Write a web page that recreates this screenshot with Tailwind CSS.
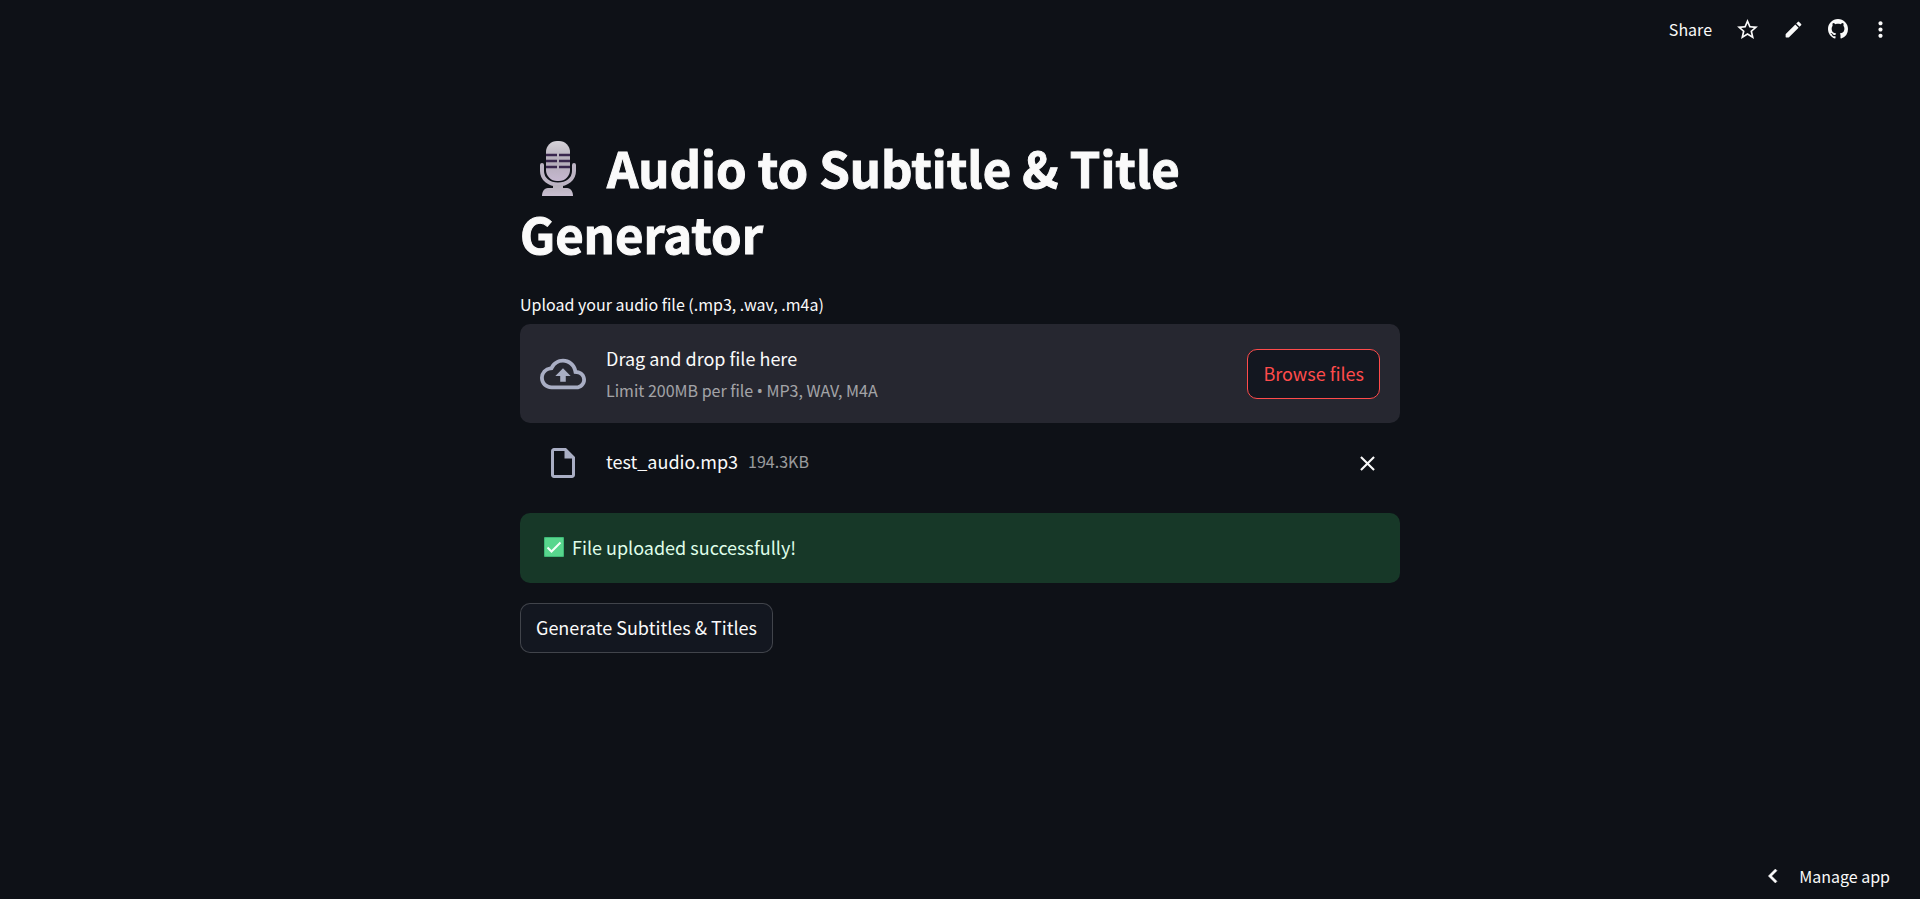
<!DOCTYPE html>
<html lang="en">
<head>
<meta charset="utf-8">
<meta name="viewport" content="width=device-width, initial-scale=1">
<title>Audio to Subtitle &amp; Title Generator</title>
<script src="https://cdn.jsdelivr.net/npm/@tailwindcss/browser@4"></script>
</head>
<body class="min-h-screen flex flex-col bg-[#0e1117] text-[#fafafa] font-['Noto_Sans_CJK_SC','Noto_Sans',sans-serif] text-lg leading-8">
<header class="h-[58px] flex items-center justify-end pr-[27px]">
  <button class="text-base leading-6 mr-6">Share</button>
  <button aria-label="Star" class="mr-6"><svg class="size-[23px]" viewBox="1 1 22 22" fill="currentColor"><path d="M22 9.24l-7.19-.62L12 2 9.19 8.63 2 9.24l5.46 4.73L5.82 21 12 17.27 18.18 21l-1.63-7.03L22 9.24zM12 15.4l-3.76 2.27 1-4.28-3.32-2.88 4.38-.38L12 6.1l1.71 4.04 4.38.38-3.32 2.88 1 4.28L12 15.4z"/></svg></button>
  <button aria-label="Edit" class="mr-6"><svg class="size-[21px]" viewBox="0 0 24 24" fill="currentColor"><path d="M3 17.46v3.04c0 .28.22.5.5.5h3.04c.13 0 .26-.05.35-.15L17.81 9.94l-3.75-3.75L3.15 17.1c-.1.1-.15.22-.15.36zM20.71 7.04a1 1 0 0 0 0-1.41l-2.34-2.34a1 1 0 0 0-1.41 0l-1.83 1.83 3.75 3.75 1.83-1.83z"/></svg></button>
  <button aria-label="View source on GitHub" class="mr-5"><svg class="size-5" viewBox="0 0 16 16" fill="currentColor"><path d="M8 0C3.58 0 0 3.58 0 8c0 3.54 2.29 6.53 5.47 7.59.4.07.55-.17.55-.38 0-.19-.01-.82-.01-1.49-2.01.37-2.53-.49-2.69-.94-.09-.23-.48-.94-.82-1.13-.28-.15-.68-.52-.01-.53.63-.01 1.08.58 1.23.82.72 1.21 1.87.87 2.33.66.07-.52.28-.87.51-1.07-1.78-.2-3.64-.89-3.64-3.95 0-.87.31-1.59.82-2.15-.08-.2-.36-1.02.08-2.12 0 0 .67-.21 2.2.82.64-.18 1.32-.27 2-.27s1.36.09 2 .27c1.53-1.04 2.2-.82 2.2-.82.44 1.1.16 1.92.08 2.12.51.56.82 1.27.82 2.15 0 3.07-1.87 3.75-3.65 3.95.29.25.54.73.54 1.48 0 1.07-.01 1.93-.01 2.2 0 .21.15.46.55.38A8.01 8.01 0 0 0 16 8c0-4.42-3.58-8-8-8z"/></svg></button>
  <button aria-label="Main menu"><svg class="size-[25px]" viewBox="0 0 24 24" fill="currentColor"><path d="M12 8c1.1 0 2-.9 2-2s-.9-2-2-2-2 .9-2 2 .9 2 2 2zm0 2c-1.1 0-2 .9-2 2s.9 2 2 2 2-.9 2-2-.9-2-2-2zm0 6c-1.1 0-2 .9-2 2s.9 2 2 2 2-.9 2-2-.9-2-2-2z"/></svg></button>
</header>

<main class="w-full max-w-[880px] mx-auto flex-1 pt-[76px]">
  <h1 class="text-[49px] leading-[66px] font-bold [-webkit-text-stroke:1px_#fafafa]">
    <svg class="inline-block w-[36px] h-[56px] ml-5 mr-[31px] -mt-3" viewBox="0 0 36 56" role="img" aria-label="Studio microphone">
      <defs>
        <linearGradient id="mic" x1="0" y1="0" x2="0" y2="1"><stop offset="0" stop-color="#d6d3d9"/><stop offset=".5" stop-color="#b3acb8"/><stop offset="1" stop-color="#c6b8d0"/></linearGradient>
        <linearGradient id="stand" x1="0" y1="0" x2="0" y2="1"><stop offset="0" stop-color="#b7b1bb"/><stop offset="1" stop-color="#c9bfd1"/></linearGradient>
      </defs>
      <path d="M2 24v6c0 8 7 13.500 16 13.500s16-5.500 16-13.500v-6" fill="none" stroke="#bcb4c3" stroke-width="4" stroke-linecap="round"/>
      <path d="M13 44h10v3h4c4 0 6 4 6 8H2c0-4 2-8 6-8h5z" fill="url(#stand)"/>
      <rect x="6" y="0" width="24" height="40" rx="11" fill="url(#mic)"/>
      <path d="M6 14h11M19 14h11M6 20h11M19 20h11M6 26h11M19 26h11" stroke="#39264d" stroke-width="2.600"/>
    </svg>Audio to Subtitle &amp; Title Generator
  </h1>

  <label for="browse" class="block mt-[26px] text-base leading-6">Upload your audio file (.mp3, .wav, .m4a)</label>
  <section class="mt-2 px-5 h-[99px] flex items-center rounded-[10px] bg-[#262730]">
    <svg class="size-[46px] mr-5 text-[#a9aec4]" viewBox="0 0 24 24" fill="currentColor"><path d="M19.350 10.040A7.490 7.490 0 0 0 12 4C9.110 4 6.600 5.640 5.350 8.040A5.994 5.994 0 0 0 0 14c0 3.310 2.690 6 6 6h13c2.760 0 5-2.240 5-5 0-2.640-2.050-4.780-4.650-4.960zM19 18H6c-2.210 0-4-1.790-4-4 0-2.050 1.530-3.760 3.560-3.970l1.070-.11.5-.95A5.469 5.469 0 0 1 12 6c2.620 0 4.880 1.860 5.390 4.430l.3 1.500 1.530.11A2.980 2.980 0 0 1 22 15c0 1.650-1.350 3-3 3zM8 13h2.550v3h2.900v-3H16l-4-4z"/></svg>
    <div class="flex-1 pt-[2px]">
      <p>Drag and drop file here</p>
      <p class="text-base leading-8 text-[#fafafa]/60">Limit 200MB per file <span class="font-['Noto_Sans']">•</span> MP3, WAV, M4A</p>
    </div>
    <button id="browse" class="h-[50px] px-[15px] pb-[2px] rounded-[10px] border border-[#ff4b4b] bg-[#131720] text-[#ff4b4b]">Browse files</button>
  </section>

  <div class="mt-[22px] mb-8 pl-[25px] pr-5 flex items-center">
    <svg class="size-[36px] mr-[25px] text-[#a9aec4]" viewBox="0 0 24 24" fill="currentColor"><path d="M14 2H6c-1.100 0-1.990.9-1.990 2L4 20c0 1.100.89 2 1.990 2H18c1.100 0 2-.9 2-2V8l-6-6zM6 20V4h7v5h5v11H6z"/></svg>
    <p class="flex-1 flex items-center gap-[10px] pb-1"><span>test_audio.mp3</span><small class="text-base text-[#fafafa]/60">194.3KB</small></p>
    <button aria-label="Remove file"><svg class="size-[25px]" viewBox="0 0 24 24" fill="currentColor"><path d="M19 6.410L17.590 5 12 10.590 6.410 5 5 6.410 10.590 12 5 17.590 6.410 19 12 13.410 17.590 19 19 17.590 13.410 12z"/></svg></button>
  </div>

  <div role="alert" class="h-[70px] px-6 pb-[2px] flex items-center gap-2 rounded-[10px] bg-[#173828] text-[#dffde9]">
    <svg class="size-5" viewBox="0 0 20 20" role="img" aria-label="Check mark"><rect width="20" height="20" rx="1" fill="#3fb877"/><rect x="1" y="1" width="18" height="18" rx="1" fill="#58d68d"/><path d="M3.500 10.500l4 4L16.500 5.500" fill="none" stroke="#f4fff8" stroke-width="2"/></svg>
    <p>File uploaded successfully!</p>
  </div>

  <button class="mt-5 h-[50px] px-[15px] pb-[2px] rounded-[10px] border border-[#fafafa]/20 bg-[#131720]">Generate Subtitles &amp; Titles</button>
</main>

<footer class="flex justify-end pr-[30px] pb-[9px]">
  <button class="flex items-center gap-3 text-base leading-6"><svg class="size-7" viewBox="0 0 24 24" fill="currentColor" stroke="currentColor" stroke-width=".4"><path d="M15.410 7.410L14 6l-6 6 6 6 1.410-1.410L10.830 12z"/></svg>Manage app</button>
</footer>
</body>
</html>
